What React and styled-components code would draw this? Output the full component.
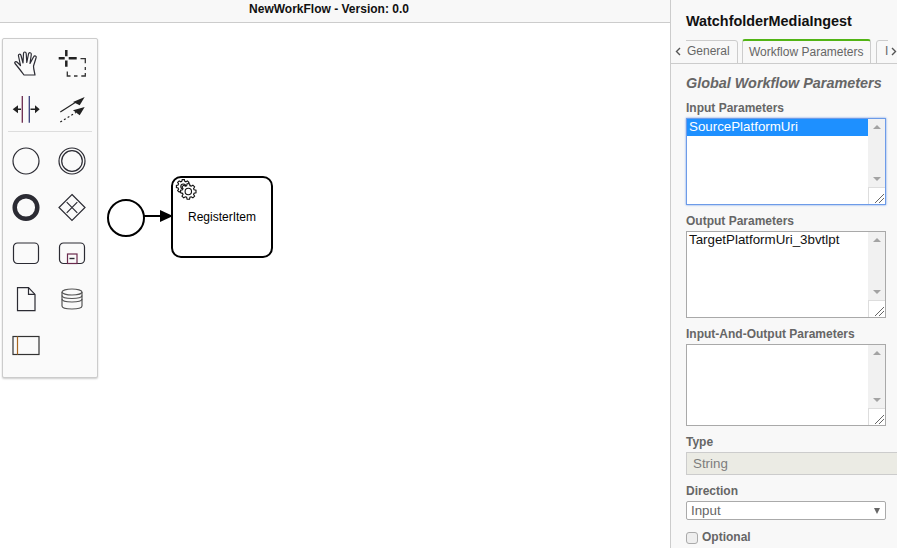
import React from 'react';
import styled, { createGlobalStyle } from 'styled-components';

const Global = createGlobalStyle`
  html, body { margin: 0; padding: 0; height: 100%; overflow: hidden; background: #fff; }
  body { font-family: "Liberation Sans", Arial, sans-serif; }
  * { box-sizing: border-box; }
`;

const Page = styled.div`
  display: flex;
  width: 897px;
  height: 548px;
  overflow: hidden;
`;
const Main = styled.div`
  width: 670px;
  display: flex;
  flex-direction: column;
`;
const Header = styled.div`
  height: 23px;
  padding-right: 12px;
  background: #f8f8f8;
  border-bottom: 1px solid #ccc;
  font-size: 12px;
  font-weight: 700;
  color: #111;
  text-align: center;
  line-height: 19px;
`;
const Canvas = styled.div`
  position: relative;
  flex: 1;
  background: #fff;
`;
const Palette = styled.div`
  position: absolute;
  left: 2px;
  top: 15px;
  width: 96px;
  height: 340px;
  background: #fafafa;
  border: 1px solid #ccc;
  border-radius: 2px;
  box-shadow: 0 1px 2px rgba(0,0,0,.2);
  padding: 2px 0 0;
  display: flex;
  flex-direction: column;
  align-items: center;
`;
const PaletteGrid = styled.div`
  display: grid;
  grid-template-columns: 46px 46px;
  grid-auto-rows: 46px;
  margin-right: 2px;
`;
const Cell = styled.div`
  display: flex;
  align-items: center;
  justify-content: center;
  color: #2b2b33;
`;
const Separator = styled.div`
  width: 84px;
  height: 1px;
  background: #ddd;
  margin: -2px 0 6px;
`;
const StartEvent = styled.div`
  position: absolute;
  left: 107px;
  top: 176px;
  width: 38px;
  height: 38px;
  border: 2px solid #000;
  border-radius: 50%;
  background: #fff;
`;
const Flow = styled.svg`
  position: absolute;
  left: 144px;
  top: 185px;
  width: 30px;
  height: 16px;
`;
const Task = styled.div`
  position: absolute;
  left: 171px;
  top: 153px;
  width: 102px;
  height: 82px;
  border: 2px solid #000;
  border-radius: 10px;
  background: #fff;
  display: flex;
  align-items: center;
  justify-content: center;
  font-size: 12px;
  color: #000;
`;
const GearBadge = styled.svg`
  position: absolute;
  left: 1px;
  top: 1px;
  width: 24px;
  height: 24px;
`;

const Panel = styled.aside`
  width: 227px;
  height: 548px;
  background: #f8f8f8;
  border-left: 1px solid #ccc;
  overflow: hidden;
  display: flex;
  flex-direction: column;
`;
const Title = styled.h1`
  margin: 0;
  padding: 13px 0 0 15px;
  height: 39px;
  font-size: 14.4px;
  line-height: 17px;
  font-weight: 700;
  color: #111;
  white-space: nowrap;
`;
const TabBar = styled.div`
  position: relative;
  height: 25px;
  display: flex;
  align-items: flex-end;
  padding-left: 9px;
  border-bottom: 1px solid #ccc;
  white-space: nowrap;
  overflow: hidden;
`;
const Tab = styled.div`
  flex: none;
  position: relative;
  top: 1px;
  height: ${p => (p.$active ? '25px' : '24px')};
  padding-left: ${p => p.$pad}px;
  width: ${p => p.$w}px;
  margin-right: ${p => p.$gap || 0}px;
  background: #f8f8f8;
  border: 1px solid #ccc;
  border-top: ${p => (p.$active ? '2px solid #52b415' : '1px solid #ccc')};
  border-bottom: ${p => (p.$active ? '1px solid #f8f8f8' : '1px solid #ccc')};
  border-radius: 3px 3px 0 0;
  font-size: 12px;
  line-height: ${p => (p.$active ? '22px' : '21px')};
  color: #666;
  overflow: hidden;
`;
const TabArrow = styled.span`
  position: absolute;
  top: 0;
  height: 24px;
  left: ${p => p.$left}px;
  width: ${p => p.$w}px;
  background: #f8f8f8;
  display: flex;
  align-items: center;
  justify-content: ${p => p.$justify};
  padding-right: ${p => p.$pr || 0}px;
`;
const Body = styled.div`
  padding: 10px 0 0 15px;
`;
const Group = styled.h2`
  margin: 0 0 8px;
  font-size: 14.4px;
  line-height: 18px;
  font-weight: 700;
  font-style: italic;
  color: #666;
  white-space: nowrap;
`;
const Label = styled.div`
  font-size: 12px;
  line-height: 14px;
  padding-top: 1px;
  font-weight: 700;
  color: #666;
  margin-top: ${p => p.$mt || 0}px;
  margin-bottom: 3px;
`;
const ListBox = styled.div`
  position: relative;
  width: 200px;
  height: ${p => p.$h}px;
  background: #fff;
  border: 1px solid ${p => (p.$focus ? '#6d9be8' : '#a9a9a9')};
  box-shadow: ${p => (p.$focus ? '0 0 2px 0 #6d9be8' : 'none')};
  padding-right: 17px;
`;
const Option = styled.div`
  height: 17px;
  padding-left: 2px;
  font-size: 13.33px;
  line-height: 16px;
  color: ${p => (p.$selected ? '#fff' : '#111')};
  background: ${p => (p.$selected ? '#1e90ff' : 'transparent')};
  white-space: nowrap;
`;
const Scroll = styled.div`
  position: absolute;
  top: 0;
  right: 0;
  bottom: 17px;
  width: 17px;
  background: #f1f1f1;
  display: flex;
  flex-direction: column;
  justify-content: space-between;
  align-items: center;
  padding: 6px 0;
`;
const Tri = styled.span`
  width: 0;
  height: 0;
  border-left: 4px solid transparent;
  border-right: 4px solid transparent;
  border-${p => (p.$down ? 'top' : 'bottom')}: 4px solid #a3a3a3;
`;
const Resizer = styled.svg`
  position: absolute;
  right: 0;
  bottom: 0;
  width: 17px;
  height: 17px;
  background: #fff;
  border-left: 1px solid #ddd;
  border-top: 1px solid #ddd;
`;
const ReadOnly = styled.div`
  width: 220px;
  height: 23px;
  background: #ebebe4;
  border: 1px solid #ccc;
  padding-left: 6px;
  font-size: 13.33px;
  line-height: 21px;
  color: #7d7d7d;
`;
const Select = styled.div`
  width: 200px;
  height: 19px;
  background: #fff;
  border: 1px solid #aaa;
  border-radius: 2px;
  padding: 0 4px;
  font-size: 13.33px;
  line-height: 16px;
  color: #666;
  display: flex;
  align-items: center;
  justify-content: space-between;
`;
const Arrow = styled.span`
  width: 0;
  height: 0;
  margin-right: 1px;
  border-left: 3.5px solid transparent;
  border-right: 3.5px solid transparent;
  border-top: 6px solid #666;
`;
const CheckRow = styled.label`
  display: flex;
  align-items: flex-start;
  gap: 4px;
  margin-top: 10px;
  font-size: 12px;
  line-height: 14px;
  font-weight: 700;
  color: #666;
`;
const CheckBox = styled.span`
  width: 12px;
  height: 12px;
  margin-top: 2px;
  background: #eee;
  border: 1px solid #aaa;
  border-radius: 3px;
`;

const Ic = ({ children }) => (
  <svg width="30" height="30" viewBox="0 0 30 30" fill="none" stroke="currentColor" strokeWidth="1.2">{children}</svg>
);

const HandIcon = () => (
  <Ic>
    <path d="M13 26C10 22 7 18 4 14.500C3 13 5 12 6.500 13.500L9.500 16.500L7.500 7C7 5 9.500 4.500 10 6.500L12 14L12.500 4.500C12.500 2.500 15 2.500 15.200 4.500L15.800 13.500L17.500 5C18 3 20.500 3.500 20.300 5.500L19 14.500L22.500 8C23.500 6 26 7 25 9L22.500 17C22.500 20 23.500 23 24 26Z" strokeLinejoin="round" />
  </Ic>
);
const LassoIcon = () => (
  <Ic>
    <path d="M1.700 9.300h6M11.700 9.300h8M9.300 1v6.200M9.300 11.500v6.200" strokeWidth="2.500" stroke="#222" />
    <path d="M23.500 9.700h4.800v4.500M28.300 18v3M28.300 24v3h-4M20.500 27h-3.500M13.500 27h-3.200v-4.500" strokeWidth="1.300" stroke="#333" />
  </Ic>
);
const SpaceIcon = () => (
  <Ic>
    <path d="M11.300 1v26.700" stroke="#6b2a4d" strokeWidth="1.300" />
    <path d="M18.300 1v26.700" stroke="#3a3f7a" strokeWidth="1.300" />
    <path d="M1.700 14.300L7 10.300v8z M28.700 14.300L24 10.300v8z" fill="#222" stroke="none" />
    <path d="M7 14.300h3M19.500 14.300h4.500" stroke="#222" strokeWidth="1.400" />
  </Ic>
);
const ConnectIcon = () => (
  <Ic>
    <path d="M3.300 17L19 7" stroke="#222" />
    <path d="M27.700 2L16 7l6.700 3.300z" fill="#222" stroke="none" />
    <path d="M3.300 27L19 17.500" stroke="#222" strokeDasharray="2 2.300" />
    <path d="M27.700 12L16 15.300l6.700 5z" fill="#222" stroke="none" />
  </Ic>
);
const StartIcon = () => <Ic><circle cx="15" cy="15" r="13" /></Ic>;
const IntermediateIcon = () => (
  <Ic><circle cx="15" cy="15" r="13" /><circle cx="15" cy="15" r="10.300" /></Ic>
);
const EndIcon = () => <Ic><circle cx="15" cy="15.500" r="11.300" strokeWidth="4.500" /></Ic>;
const GatewayIcon = () => (
  <Ic>
    <path d="M15 2.500L28 15.500 15 28.500 2 15.500z" />
    <path d="M9.700 10.200l10.600 10.600M20.300 10.200L9.700 20.800" />
  </Ic>
);
const TaskIcon = () => <Ic><rect x="2.500" y="5" width="25" height="20.500" rx="4" /></Ic>;
const SubIcon = () => (
  <Ic>
    <rect x="2.500" y="5" width="25" height="20.500" rx="4" />
    <rect x="10.500" y="16" width="9.500" height="9.500" stroke="#6b2a4d" />
    <path d="M12.500 20.500h5" strokeWidth="1.400" />
  </Ic>
);
const DataIcon = () => (
  <Ic>
    <path d="M6.500 3.700h11l6.500 6.700v16.300H6.500z" />
    <path d="M17.500 3.700v6.700H24" />
  </Ic>
);
const StoreIcon = () => (
  <Ic>
    <ellipse cx="15" cy="8" rx="10" ry="3" stroke="#555" />
    <path d="M5 8v14c0 2 4 3 10 3s10-1 10-3V8" stroke="#555" />
    <path d="M5 11.500c0 2 4 3 10 3s10-1 10-3M5 15c0 2 4 3 10 3s10-1 10-3" stroke="#555" />
  </Ic>
);
const PoolIcon = () => (
  <Ic>
    <rect x="2" y="6.500" width="26" height="18" stroke="#333" />
    <path d="M6.500 6.500v18" stroke="#a8661f" />
  </Ic>
);

const gearPath = (cx, cy, ro, ri, teeth) => {
  const step = (Math.PI * 2) / teeth;
  const pts = [];
  for (let i = 0; i < teeth; i += 1) {
    const a = i * step;
    [[-0.36, ri], [-0.2, ro], [0.2, ro], [0.36, ri]].forEach(([f, r]) => {
      const t = a + f * step;
      pts.push(`${(cx + r * Math.cos(t)).toFixed(2)} ${(cy + r * Math.sin(t)).toFixed(2)}`);
    });
  }
  return `M${pts.join('L')}Z`;
};

const GearIcon = () => (
  <GearBadge viewBox="0 0 24 24" fill="#fff" stroke="#111" strokeWidth="1.100">
    <path d={gearPath(9.3, 7.5, 7, 5.4, 8)} />
    <circle cx="9.300" cy="7.500" r="2.500" />
    <path d={gearPath(14.3, 12.5, 7.8, 6, 8)} />
    <circle cx="14.300" cy="12.500" r="3.200" />
  </GearBadge>
);

const ChevronLeft = () => (
  <svg width="6" height="9" viewBox="0 0 6 9" fill="none" stroke="#555" strokeWidth="1.400"><path d="M5 1L1.500 4.500 5 8" /></svg>
);
const ChevronRight = () => (
  <svg width="6" height="9" viewBox="0 0 6 9" fill="none" stroke="#555" strokeWidth="1.400"><path d="M1 1l3.500 3.500L1 8" /></svg>
);

const ScrollBar = () => (
  <>
    <Scroll><Tri /><Tri $down /></Scroll>
    <Resizer viewBox="0 0 16 16" stroke="#666" strokeWidth="1">
      <path d="M6 15L15 6M10 15l5-5" />
    </Resizer>
  </>
);

export default function App() {
  return (
    <Page>
      <Global />
      <Main>
        <Header>NewWorkFlow - Version: 0.0</Header>
        <Canvas>
          <Palette>
            <PaletteGrid>
              <Cell><HandIcon /></Cell>
              <Cell><LassoIcon /></Cell>
              <Cell><SpaceIcon /></Cell>
              <Cell><ConnectIcon /></Cell>
            </PaletteGrid>
            <Separator />
            <PaletteGrid>
              <Cell><StartIcon /></Cell>
              <Cell><IntermediateIcon /></Cell>
              <Cell><EndIcon /></Cell>
              <Cell><GatewayIcon /></Cell>
              <Cell><TaskIcon /></Cell>
              <Cell><SubIcon /></Cell>
              <Cell><DataIcon /></Cell>
              <Cell><StoreIcon /></Cell>
              <Cell><PoolIcon /></Cell>
            </PaletteGrid>
          </Palette>
          <StartEvent />
          <Flow viewBox="0 0 30 16">
            <path d="M0 8h18" stroke="#000" strokeWidth="2" />
            <path d="M16 2l13 6-13 6z" fill="#000" />
          </Flow>
          <Task>
            <GearIcon />
            RegisterItem
          </Task>
        </Canvas>
      </Main>
      <Panel>
        <Title>WatchfolderMediaIngest</Title>
        <TabBar>
          <Tab $w={58} $pad={6} $gap={4}>General</Tab>
          <Tab $w={129} $pad={6} $gap={5} $active>Workflow Parameters</Tab>
          <Tab $w={40} $pad={8}>I</Tab>
          <TabArrow $left={0} $w={15} $justify="center" $pr={1}><ChevronLeft /></TabArrow>
          <TabArrow $left={217} $w={9} $justify="flex-end"><ChevronRight /></TabArrow>
        </TabBar>
        <Body>
          <Group>Global Workflow Parameters</Group>
          <Label>Input Parameters</Label>
          <ListBox $h={87} $focus>
            <Option $selected>SourcePlatformUri</Option>
            <ScrollBar />
          </ListBox>
          <Label $mt={8}>Output Parameters</Label>
          <ListBox $h={87}>
            <Option>TargetPlatformUri_3bvtlpt</Option>
            <ScrollBar />
          </ListBox>
          <Label $mt={8}>Input-And-Output Parameters</Label>
          <ListBox $h={82}>
            <ScrollBar />
          </ListBox>
          <Label $mt={8}>Type</Label>
          <ReadOnly>String</ReadOnly>
          <Label $mt={8}>Direction</Label>
          <Select>Input<Arrow /></Select>
          <CheckRow><CheckBox />Optional</CheckRow>
        </Body>
      </Panel>
    </Page>
  );
}
